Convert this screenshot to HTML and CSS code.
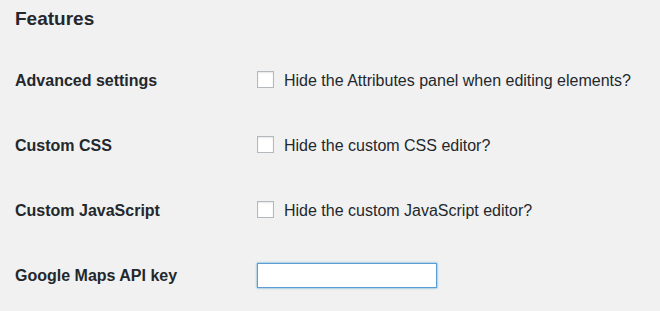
FILE: index.html
```html
<!DOCTYPE html>
<html lang="en">
<head>
    <meta charset="UTF-8">
    <title>Features</title>
    <link rel="stylesheet" href="styles.css">
</head>
<body>
    <div class="wrap">
        <h2 class="title">Features</h2>
        <div class="form-table">
            <div class="row">
                <div class="label">Advanced settings</div>
                <label class="field"><span class="checkbox"></span>Hide the Attributes panel when editing elements?</label>
            </div>
            <div class="row">
                <div class="label">Custom CSS</div>
                <label class="field"><span class="checkbox"></span>Hide the custom CSS editor?</label>
            </div>
            <div class="row">
                <div class="label">Custom JavaScript</div>
                <label class="field"><span class="checkbox"></span>Hide the custom JavaScript editor?</label>
            </div>
            <div class="row">
                <div class="label">Google Maps API key</div>
                <div class="field"><input class="text-input" type="text"></div>
            </div>
        </div>
    </div>
</body>
</html>
```

FILE: styles.css
```css
* {
    margin: 0;
    padding: 0;
    box-sizing: border-box;
}
body {
    background-color: #f1f1f1;
    color: #23282d;
    font-family: "Liberation Sans", Arial, sans-serif;
    font-size: 16px;
}
.wrap {
    padding: 8px 15px;
}
.title {
    font-size: 19px;
    font-weight: 600;
    line-height: 22px;
}
.form-table {
    display: flex;
    flex-direction: column;
    margin-top: 18px;
}
.row {
    display: grid;
    grid-template-columns: 242px 1fr;
    align-items: center;
    height: 65px;
}
.label {
    font-weight: 600;
}
.field {
    display: flex;
    align-items: center;
    gap: 10px;
}
.checkbox {
    width: 17px;
    height: 17px;
    margin-top: -2px;
    background-color: #fff;
    border: 1px solid #b4b9be;
    box-shadow: inset 0 1px 2px rgba(0, 0, 0, 0.1);
}
.text-input {
    width: 180px;
    height: 25px;
    border: 1px solid #5b9dd9;
    box-shadow: 0 0 2px rgba(30, 140, 190, 0.8);
    background-color: #fff;
    outline: none;
}
```
